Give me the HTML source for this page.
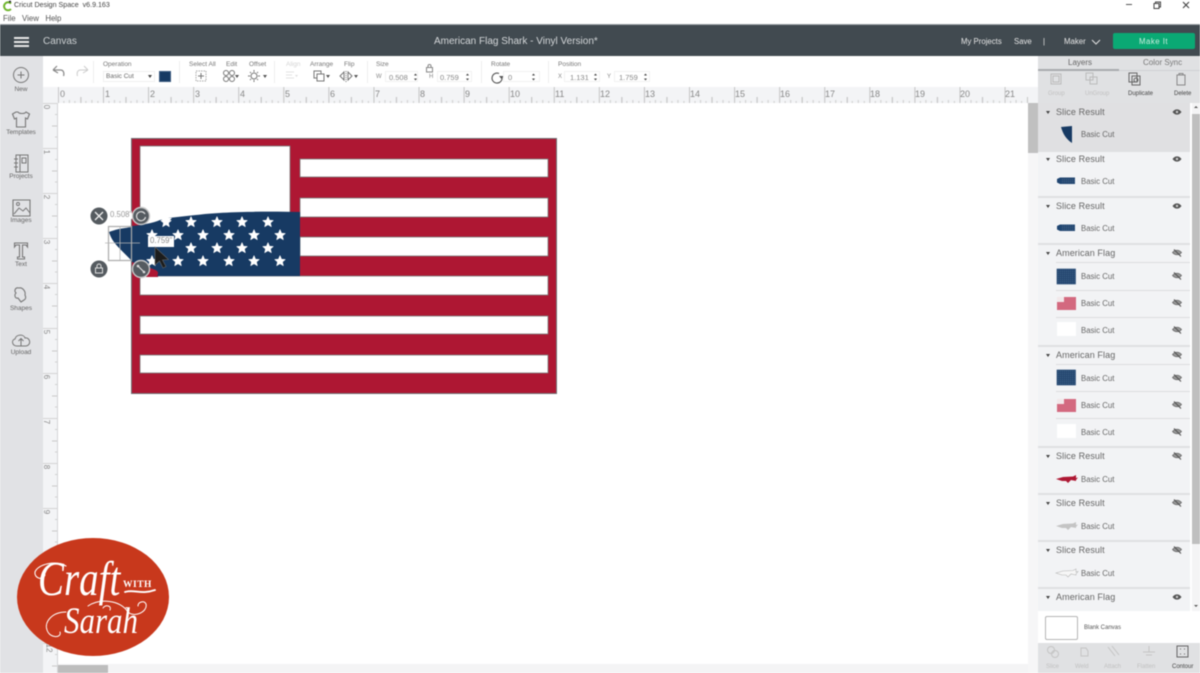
<!DOCTYPE html>
<html><head><meta charset="utf-8"><style>
html,body{margin:0;padding:0;background:#fff}
#p{position:relative;width:1200px;height:673px;overflow:hidden;background:#fff;font-family:"Liberation Sans",sans-serif;filter:blur(.45px)}
#p div,#p svg{position:absolute}
.t{position:absolute;white-space:nowrap;line-height:1}
.l{font-size:6.500px;color:#666;text-align:center;transform:translateX(-50%)}
.h{font-size:9px;color:#666;left:1056px;letter-spacing:.1px}
.b{font-size:7.800px;color:#666;left:1081px}
.o{font-size:6.500px;color:#777;top:62px}
.dv{left:1038px;width:152px;height:2px;background:#dfe0e2}
.sd{left:1056px;width:134px;height:1px;background:#dcdddf}
.ar{position:absolute;left:1046px;width:0;height:0;border-left:2.500px solid transparent;border-right:2.500px solid transparent;border-top:3px solid #444}
.in{position:absolute;top:71px;height:11px;background:#fff;border:1px solid #f2f2f2;font-size:7.500px;color:#888;line-height:11px;box-sizing:border-box}
.r{font-size:9px;color:#888;top:90px}
.rv{font-size:8px;color:#888;left:44px;transform:rotate(90deg)}
</style></head><body><div id="p">

<!-- title bar -->
<svg style="left:2px;top:0" width="12" height="12" viewBox="0 0 12 12"><path d="M9 3.600A4 4 0 1 0 9 9" fill="none" stroke="#6fb52c" stroke-width="2"/><circle cx="8" cy="1.600" r="1.100" fill="#333"/></svg>
<span class="t" style="left:14px;top:2px;font-size:7.100px;color:#444">Cricut Design Space&nbsp; v6.9.163</span>
<span class="t" style="left:3px;top:15px;font-size:7.800px;color:#555">File&nbsp;&nbsp; View&nbsp;&nbsp; Help</span>
<svg style="left:1120px;top:0" width="80" height="12" viewBox="0 0 80 12"><path d="M6 4.500h6" stroke="#555" fill="none"/><path d="M34 3.500h5v5h-5zM35.500 3.500v-1.500h5v5h-1.500" stroke="#444" fill="none"/><path d="M63 2l6 6M69 2l-6 6" stroke="#444" fill="none" stroke-width="1.100"/></svg>

<!-- top bar -->
<div style="left:0;top:24px;width:1200px;height:1.500px;background:#9aa0a4"></div>
<div style="left:0;top:25px;width:1200px;height:31px;background:#414a50"></div>
<div style="left:14px;top:37px;width:15px;height:2px;background:#e8e8e8"></div>
<div style="left:14px;top:41px;width:15px;height:2px;background:#e8e8e8"></div>
<div style="left:14px;top:45px;width:15px;height:2px;background:#e8e8e8"></div>
<span class="t" style="left:43px;top:36px;font-size:10px;color:#ccd0d2;transform:translateY(1px)">Canvas</span>
<span class="t" style="left:434px;top:37px;font-size:10px;color:#d4d7d9">American Flag Shark - Vinyl Version*</span>
<span class="t" style="left:961px;top:38px;font-size:7.800px;color:#e6e6e6">My Projects</span>
<span class="t" style="left:1014px;top:38px;font-size:7.800px;color:#e6e6e6">Save</span>
<span class="t" style="left:1043px;top:38px;font-size:7.800px;color:#e6e6e6">|</span>
<span class="t" style="left:1064px;top:38px;font-size:7.800px;color:#e6e6e6">Maker</span>
<svg style="left:1091px;top:39px" width="11" height="6" viewBox="0 0 11 6"><path d="M1 1l4 4 4-4" fill="none" stroke="#ddd" stroke-width="1.100"/></svg>
<div style="left:1113px;top:33px;width:82px;height:16px;background:#0aa974;border-radius:2px"></div>
<span class="t" style="left:1139px;top:38px;font-size:7.800px;color:#cdeee0;letter-spacing:.5px">Make It</span>

<!-- left panel -->
<div style="left:0;top:56px;width:43px;height:617px;background:#e1e2e5"></div>
<svg style="left:0;top:56px" width="43" height="310" viewBox="0 0 43 310">
<g fill="none" stroke="#777" stroke-width="1">
<circle cx="21" cy="19" r="7.500"/><path d="M21 15.500v7M17.500 19h7"/>
<path d="M16 56l-3.500 2 2 5 2-1v9h9v-9l2 1 2-5-3.500-2c-1 2-7 2-8 0z" stroke-width="1.100"/>
<path d="M16 99h12v17h-12zM20 99v17M14 103h4M14 107h4M14 111h4M22 102h4v5h-4z"/>
<path d="M13 144h17v16h-17z" stroke-width="1.100"/><path d="M14 158l5-6 4 3 3-3 4 5"/><circle cx="18" cy="148" r="1.500"/>
<path d="M14.500 187h13v4l-1.500-2h-3.500v12h2v2h-7v-2h2v-12h-3.500l-1.500 2z" stroke-width="1.100"/>
<path d="M19 232c-4-1-5 3-3 5-2 2-1 6 2 5l3 4 3-2c2-1 2-3 1-5 1-4-3-8-6-7z" stroke-width="1.100"/>
<path d="M17 290c-5 0-6-6-2-7 1-5 9-5 10-1 5-1 7 7 1 8zM21 290v-7M18.500 285l2.500-2.500 2.500 2.500"/>
</g></svg>
<span class="t l" style="left:21px;top:87px">New</span>
<span class="t l" style="left:21px;top:130px">Templates</span>
<span class="t l" style="left:21px;top:174px">Projects</span>
<span class="t l" style="left:21px;top:218px">Images</span>
<span class="t l" style="left:21px;top:262px">Text</span>
<span class="t l" style="left:21px;top:306px">Shapes</span>
<span class="t l" style="left:21px;top:350px">Upload</span>

<!-- toolbar -->
<svg style="left:43px;top:56px" width="995" height="31" viewBox="0 0 995 31">
<g fill="none" stroke="#888"><path d="M10 14l4-4M10 14l5 3M10.500 14h7c3 0 4 3 3 6" stroke-width="1.200"/><path d="M45 14l-4-4M45 14l-5 3M44.500 14h-7c-3 0-4 3-3 6" stroke="#ccc" stroke-width="1"/></g>
<g stroke="#eeeeee"><path d="M50.500 5v22M136.500 5v22M231.500 5v22M324.500 5v22M438.500 5v22M505.500 5v22"/></g>
<rect x="153" y="15" width="10" height="10" fill="none" stroke="#aaa" stroke-dasharray="1.500 1"/><path d="M158 17v6M155 20h6" stroke="#777"/>
<g fill="none" stroke="#777"><circle cx="183" cy="17" r="2.500"/><circle cx="189" cy="17" r="2.500"/><circle cx="183" cy="23" r="2.500"/><circle cx="189" cy="23" r="2.500"/>
<circle cx="211" cy="20" r="3"/><path d="M211 14v2M211 24v2M205 20h2M215 20h2M207 16l1 1M215 16l-1 1M207 24l1-1M215 24l-1-1"/>
<path d="M271 15h7v7h-7z"/><path d="M274 18h7v7h-7z" fill="#fff"/>
<path d="M303 15v11" stroke-dasharray="1 1"/><path d="M301 16l-4 4 4 4zM305 16l4 4-4 4z"/></g>
<path d="M243 16h8M243 19h6M243 22h8" stroke="#e2e2e2"/>
<path d="M192 19h4l-2 3zM220 19h4l-2 3zM283 19h4l-2 3zM311 19h4l-2 3z" fill="#555"/>
<path d="M252 19h3l-1.500 2z" fill="#ddd"/>
<path d="M456 17.500a5 5 0 1 0 3 4" fill="none" stroke="#555" stroke-width="1.100"/><path d="M456 20h5l-2.500 3z" fill="#555"/>
</svg>
<span class="t o" style="left:103px">Operation</span>
<div style="left:103px;top:71px;width:52px;height:11px;background:#fff;border:1px solid #f0f0f0;box-sizing:border-box"></div>
<span class="t" style="left:106px;top:73.500px;font-size:6.500px;color:#666">Basic Cut</span>
<div style="left:148px;top:75px;width:0;height:0;border-left:2px solid transparent;border-right:2px solid transparent;border-top:3px solid #444"></div>
<div style="left:159px;top:71px;width:12px;height:11px;background:#173a63;border:.5px solid #3a5a80;box-sizing:border-box"></div>
<span class="t o" style="left:189px">Select All</span>
<span class="t o" style="left:226px">Edit</span>
<span class="t o" style="left:249px">Offset</span>
<span class="t o" style="left:286px;color:#d4d4d4">Align</span>
<span class="t o" style="left:310px">Arrange</span>
<span class="t o" style="left:344px">Flip</span>
<span class="t o" style="left:376px">Size</span>
<span class="t o" style="left:491px">Rotate</span>
<span class="t o" style="left:558px">Position</span>
<span class="t" style="left:376px;top:74px;font-size:6px;color:#888">W</span>
<div class="in" style="left:385px;width:33px;padding-left:3px">0.508</div>
<svg style="left:425px;top:63px" width="9" height="10" viewBox="0 0 9 10"><path d="M1.500 4.500h6v4.500h-6zM3 4.500v-1.500a1.500 1.500 0 0 1 3 0v1.500" fill="none" stroke="#888"/></svg>
<span class="t" style="left:429px;top:74px;font-size:6px;color:#888">H</span>
<div class="in" style="left:437px;width:35px;padding-left:2px">0.759</div>
<div class="in" style="left:503px;width:37px;padding-left:4px">0</div>
<span class="t" style="left:558px;top:74px;font-size:6px;color:#888">X</span>
<div class="in" style="left:564px;width:36px;padding-left:5px">1.131</div>
<span class="t" style="left:607px;top:74px;font-size:6px;color:#888">Y</span>
<div class="in" style="left:614px;width:36px;padding-left:4px">1.759</div>
<svg style="left:410px;top:72px" width="240" height="10" viewBox="0 0 240 10"><path d="M4 3.500l1.500-2 1.500 2zM4 6.500l1.500 2 1.500-2zM56 3.500l1.500-2 1.500 2zM56 6.500l1.500 2 1.500-2zM122 3.500l1.500-2 1.500 2zM122 6.500l1.500 2 1.500-2zM184 3.500l1.500-2 1.500 2zM184 6.500l1.500 2 1.500-2zM234 3.500l1.500-2 1.500 2zM234 6.500l1.500 2 1.500-2z" fill="#444"/></svg>

<!-- rulers -->
<div style="left:43px;top:87px;width:995px;height:16px;background:#f3f4f6"></div>
<div style="left:43px;top:103px;width:15px;height:570px;background:#f3f4f6"></div>
<svg style="left:0;top:87px" width="1038" height="16"><defs><pattern id="rh" x="57.900" y="0" width="45.080" height="16" patternUnits="userSpaceOnUse"><path d="M.5 0V16" stroke="#c4c4c4"/><path d="M23 10V16" stroke="#bbb"/><path d="M11.500 13V16M34 13V16M6 14V16M17 14V16M28 14V16M40 14V16" stroke="#ccc"/></pattern></defs><rect x="58" width="970" height="16" fill="url(#rh)"/></svg>
<svg style="left:43px;top:0" width="15" height="673"><defs><pattern id="rv" x="0" y="103" width="15" height="45" patternUnits="userSpaceOnUse"><path d="M0 .5H15" stroke="#d4d4d4"/><path d="M9 23H15" stroke="#c8c8c8"/><path d="M12 11.500H15M12 34H15" stroke="#d0d0d0"/></pattern></defs><rect y="103" width="15" height="570" fill="url(#rv)"/></svg>
<div style="left:57px;top:103px;width:1px;height:570px;background:#d4d5d8"></div>
<span class="t r" style="left:60px">0</span><span class="t r" style="left:105px">1</span><span class="t r" style="left:150px">2</span><span class="t r" style="left:195px">3</span><span class="t r" style="left:240px">4</span><span class="t r" style="left:285px">5</span><span class="t r" style="left:330px">6</span><span class="t r" style="left:375px">7</span><span class="t r" style="left:420px">8</span><span class="t r" style="left:465px">9</span><span class="t r" style="left:510px">10</span><span class="t r" style="left:555px">11</span><span class="t r" style="left:600px">12</span><span class="t r" style="left:645px">13</span><span class="t r" style="left:690px">14</span><span class="t r" style="left:735px">15</span><span class="t r" style="left:780px">16</span><span class="t r" style="left:825px">17</span><span class="t r" style="left:870px">18</span><span class="t r" style="left:915px">19</span><span class="t r" style="left:960px">20</span><span class="t r" style="left:1005px">21</span>
<span class="t rv" style="top:103px">0</span><span class="t rv" style="top:148px">1</span><span class="t rv" style="top:193px">2</span><span class="t rv" style="top:238px">3</span><span class="t rv" style="top:283px">4</span><span class="t rv" style="top:328px">5</span><span class="t rv" style="top:373px">6</span><span class="t rv" style="top:418px">7</span><span class="t rv" style="top:463px">8</span><span class="t rv" style="top:508px">9</span>
<span class="t rv" style="top:644px">12</span>

<!-- canvas scrollbars -->
<div style="left:1028px;top:103px;width:10px;height:570px;background:#f6f6f7"></div>
<div style="left:1028px;top:103px;width:10px;height:50px;background:#c0c0c0"></div>
<div style="left:58px;top:664px;width:970px;height:9px;background:#f4f4f5"></div>
<div style="left:58px;top:665px;width:50px;height:8px;background:#bdbdbd"></div>

<!-- flag -->
<svg style="left:0;top:0" width="1030" height="673" viewBox="0 0 1030 673">
<defs>
<path id="star" d="M0-5.500L1.600-1.800 5.400-1.500 2.500 1 3.400 4.800 0 2.800-3.400 4.800-2.500 1-5.400-1.500-1.600-1.800z" fill="#fff" stroke="#fff" stroke-width=".5"/></defs>
<rect x="131.500" y="138.500" width="425" height="255" fill="#ae1733" stroke="#6e6e72" stroke-width="1"/>
<g fill="#fff" stroke="#777" stroke-width=".8">
<rect x="140" y="146" width="150" height="90"/>
<rect x="300" y="159" width="248" height="18"/>
<rect x="300" y="198" width="248" height="19"/>
<rect x="300" y="237" width="248" height="19"/>
<rect x="140" y="276" width="408" height="19"/>
<rect x="140" y="316" width="408" height="18"/>
<rect x="140" y="355" width="408" height="18"/>
</g>
<path d="M148 267L161 267L158 277L146 277z" fill="#ae1733"/>
<rect x="132" y="218" width="8" height="12" fill="#ae1733"/>
<path d="M109 232C116 229 124 228 132 227V261L121 250C115 244 111 239 109 232z" fill="#173a63"/>
<path d="M132 226C142 225 153 223 160 220L168 218C178 217 186 216 196 215C220 212 260 211 300 212V276H157C160 271 156 270 150 268L132 262z" fill="#173a63"/>
<g>
<use href="#star" x="166" y="222"/><use href="#star" x="191" y="222"/><use href="#star" x="217" y="222"/><use href="#star" x="242" y="222"/><use href="#star" x="268" y="222"/>
<use href="#star" x="152" y="235"/><use href="#star" x="178" y="235"/><use href="#star" x="203" y="235"/><use href="#star" x="229" y="235"/><use href="#star" x="254" y="235"/><use href="#star" x="280" y="235"/>
<use href="#star" x="191" y="248"/><use href="#star" x="217" y="248"/><use href="#star" x="242" y="248"/><use href="#star" x="268" y="248"/>
<use href="#star" x="152" y="261"/><use href="#star" x="178" y="261"/><use href="#star" x="203" y="261"/><use href="#star" x="229" y="261"/><use href="#star" x="254" y="261"/><use href="#star" x="280" y="261"/>
</g>
<path d="M160 218l6 6 6-6z" fill="#fff"/>
<!-- selection -->
<rect x="108.500" y="226.500" width="23" height="34" fill="none" stroke="#aaa" stroke-width="1.200"/>
<path d="M120 226v34M105 243h35" stroke="#b5b5b5" stroke-width=".8" fill="none"/>
<g fill="#555b60"><circle cx="99" cy="216" r="8.500"/><circle cx="99" cy="269" r="8.500"/></g>
<g stroke="#c8c8c8" stroke-width="1.400" fill="#555b60"><circle cx="141" cy="216" r="8.500"/><circle cx="141" cy="269" r="8.500"/></g>
<path d="M95 212l8 8M103 212l-8 8" stroke="#eee" stroke-width="1.300"/>
<path d="M95.500 268h7v5h-7zM97 268v-2a2 2 0 0 1 4 0v2" fill="none" stroke="#ddd"/>
<path d="M145 214a4.500 4.500 0 1 0 .5 3" fill="none" stroke="#ddd" stroke-width="1.200"/>
<path d="M138 266l6 6" stroke="#ddd" stroke-width="1.200"/><circle cx="138" cy="266" r="1.300" fill="#ddd"/><circle cx="144" cy="272" r="1.300" fill="#ddd"/>
<rect x="148" y="236" width="26" height="11" fill="#fff"/>
<path d="M155 247v18l4.500-4 3.500 7 3-1.500-3.500-6.500 6-.5z" fill="#1c1c1c" stroke="#666" stroke-width=".6"/>
</svg>
<span class="t" style="left:110px;top:211px;font-size:7.800px;color:#999;background:#fff">0.508"</span>
<span class="t" style="left:150px;top:237px;font-size:7.800px;color:#888">0.759"</span>

<!-- right panel -->
<div style="left:1038px;top:56px;width:162px;height:47px;background:#e0e1e3"></div>
<div style="left:1038px;top:69px;width:81px;height:2px;background:#a8abae"></div>
<div style="left:1119px;top:70px;width:81px;height:1px;background:#cfd0d3"></div>
<span class="t" style="left:1068px;top:59px;font-size:8px;color:#666">Layers</span>
<span class="t" style="left:1143px;top:59px;font-size:8px;color:#777">Color Sync</span>
<span class="t" style="left:1048px;top:91px;font-size:6px;color:#c0c0c0">Group</span>
<span class="t" style="left:1085px;top:91px;font-size:6px;color:#c0c0c0">UnGroup</span>
<span class="t" style="left:1128px;top:91px;font-size:6px;color:#444">Duplicate</span>
<span class="t" style="left:1174px;top:91px;font-size:6px;color:#444">Delete</span>
<svg style="left:1038px;top:71px" width="162" height="20" viewBox="0 0 162 20"><g fill="none" stroke="#bbb"><rect x="13" y="3" width="10" height="10"/><rect x="15" y="5" width="6" height="6"/><path d="M48 2h7v7h-7zM52 6h7v7h-7z"/></g><g fill="none" stroke="#666"><rect x="91" y="2" width="8" height="9"/><rect x="94" y="5" width="8" height="9"/><circle cx="98" cy="9" r="2"/></g><path d="M139 4h8v10h-8zM141 4v-1.500h4v1.500" fill="none" stroke="#888"/></svg>

<div style="left:1038px;top:103px;width:152px;height:508px;background:#f2f3f5"></div>
<div style="left:1038px;top:103px;width:152px;height:47px;background:#e0e0e2"></div>
<div style="left:1192px;top:103px;width:8px;height:508px;background:#f4f4f5"></div>
<div style="left:1192px;top:114px;width:8px;height:430px;background:#bfbfbf"></div>
<div style="left:1194px;top:106px;width:0;height:0;border-left:2px solid transparent;border-right:2px solid transparent;border-bottom:2.500px solid #555"></div>
<div style="left:1194px;top:605px;width:0;height:0;border-left:2px solid transparent;border-right:2px solid transparent;border-top:2.500px solid #555"></div>

<div class="dv" style="top:150px"></div><div class="dv" style="top:196px"></div><div class="dv" style="top:243px"></div><div class="dv" style="top:345px"></div><div class="dv" style="top:446px"></div><div class="dv" style="top:493px"></div><div class="dv" style="top:540px"></div><div class="dv" style="top:587px"></div>
<div class="sd" style="top:262px"></div><div class="sd" style="top:290px"></div><div class="sd" style="top:317px"></div><div class="sd" style="top:364px"></div><div class="sd" style="top:391px"></div><div class="sd" style="top:418px"></div>

<i class="ar" style="top:111px"></i><span class="t h" style="top:108px">Slice Result</span><span class="t b" style="top:131px">Basic Cut</span>
<i class="ar" style="top:158px"></i><span class="t h" style="top:155px">Slice Result</span><span class="t b" style="top:178px">Basic Cut</span>
<i class="ar" style="top:205px"></i><span class="t h" style="top:202px">Slice Result</span><span class="t b" style="top:225px">Basic Cut</span>
<i class="ar" style="top:252px"></i><span class="t h" style="top:249px">American Flag</span>
<span class="t b" style="top:273px">Basic Cut</span><span class="t b" style="top:300px">Basic Cut</span><span class="t b" style="top:327px">Basic Cut</span>
<i class="ar" style="top:354px"></i><span class="t h" style="top:351px">American Flag</span>
<span class="t b" style="top:375px">Basic Cut</span><span class="t b" style="top:402px">Basic Cut</span><span class="t b" style="top:429px">Basic Cut</span>
<i class="ar" style="top:455px"></i><span class="t h" style="top:452px">Slice Result</span><span class="t b" style="top:476px">Basic Cut</span>
<i class="ar" style="top:502px"></i><span class="t h" style="top:499px">Slice Result</span><span class="t b" style="top:523px">Basic Cut</span>
<i class="ar" style="top:549px"></i><span class="t h" style="top:546px">Slice Result</span><span class="t b" style="top:570px">Basic Cut</span>
<i class="ar" style="top:596px"></i><span class="t h" style="top:593px">American Flag</span>

<svg style="left:1038px;top:103px" width="152" height="508" viewBox="0 0 152 508">
<defs>
<g id="eye"><path d="M-4.500 0C-2 -3.500 2 -3.500 4.500 0C2 3.500 -2 3.500 -4.500 0z" fill="#555"/><circle r="1.200" fill="#ccc"/></g>
<g id="noeye"><path d="M-4.500 -.5C-2 -3.500 2 -3.500 4.500 -.5C2 2.500 -2 2.500 -4.500 -.5z" fill="#999" stroke="#666" stroke-width=".8"/><path d="M-3-3.500L4 3.500" stroke="#555" stroke-width="1.100"/></g>
<pattern id="dots" width="2" height="2" patternUnits="userSpaceOnUse"><rect width="2" height="2" fill="#24476f"/><rect width="1" height="1" fill="#3f608a"/></pattern>
<g id="mf"><rect width="19" height="13" y="1" fill="#d3697f"/><rect x="0" y="1" width="7" height="5" fill="#f2e8ea"/></g>
<path id="shk" d="M0 3l7-2 10-.500 3-1.500 0 3 2-.5-2 2.500 0 1-5-1-3 3-2-2-4 0z"/>
</defs>
<use href="#eye" x="139" y="9"/><use href="#eye" x="139" y="56"/><use href="#eye" x="139" y="103"/>
<use href="#noeye" x="139" y="150"/><use href="#noeye" x="139" y="173"/><use href="#noeye" x="139" y="200"/><use href="#noeye" x="139" y="227"/>
<use href="#noeye" x="139" y="252"/><use href="#noeye" x="139" y="275"/><use href="#noeye" x="139" y="302"/><use href="#noeye" x="139" y="329"/>
<use href="#noeye" x="139" y="353"/><use href="#noeye" x="139" y="400"/><use href="#noeye" x="139" y="447"/>
<use href="#eye" x="139" y="494"/>
<path d="M23 24L34 23V40C28 36 25 31 23 24z" fill="#173a63"/>
<path d="M19 76l3-1.500H37V81H22l-3-1.500z" fill="#1f4571"/><rect x="24" y="75" width="13" height="5.500" fill="url(#dots)"/>
<path d="M19 123l3-1.500H37V128H22l-3-1.500z" fill="#1f4571"/><rect x="24" y="122" width="13" height="5.500" fill="url(#dots)"/>
<rect x="19" y="166" width="18.500" height="15" fill="url(#dots)" stroke="#1f4571" stroke-width=".6"/>
<use href="#mf" x="19" y="193"/>
<rect x="19" y="219" width="19" height="14" fill="#fff"/>
<rect x="19" y="267" width="18.500" height="15" fill="url(#dots)" stroke="#1f4571" stroke-width=".6"/>
<use href="#mf" x="19" y="295"/>
<rect x="19" y="321" width="19" height="14" fill="#fff"/>
<use href="#shk" x="18" y="373" fill="#ae1733"/>
<use href="#shk" x="18" y="420" fill="#c4c4c4"/>
<use href="#shk" x="18" y="467" fill="#f6f6f6" stroke="#b5b5b5" stroke-width=".6"/>
</svg>

<div style="left:1038px;top:611px;width:162px;height:32px;background:#fff"></div>
<div style="left:1045px;top:616px;width:33px;height:24px;background:#fff;border:1px solid #b5b5b5;border-radius:2px;box-sizing:border-box"></div>
<span class="t" style="left:1084px;top:625px;font-size:6px;color:#555">Blank Canvas</span>
<div style="left:1038px;top:643px;width:162px;height:30px;background:#e0e1e3"></div>
<svg style="left:1038px;top:643px" width="162" height="20" viewBox="0 0 162 20"><g fill="none" stroke="#c4c4c4"><circle cx="13" cy="7" r="3.500"/><circle cx="17" cy="11" r="3.500"/><path d="M43 5h5l2 3v5h-7zM70 4l7 9M74 3l7 9"/><path d="M105 9h12M111 3v6M108 12h6"/></g><g fill="none" stroke="#666"><rect x="139" y="3" width="11" height="11"/></g><path d="M142 6h1M146 6h1M142 11h1M146 11h1" stroke="#666"/></svg>
<span class="t" style="left:1046px;top:664px;font-size:6px;color:#c0c0c0">Slice</span>
<span class="t" style="left:1075px;top:664px;font-size:6px;color:#c0c0c0">Weld</span>
<span class="t" style="left:1104px;top:664px;font-size:6px;color:#c0c0c0">Attach</span>
<span class="t" style="left:1137px;top:664px;font-size:6px;color:#c0c0c0">Flatten</span>
<span class="t" style="left:1172px;top:664px;font-size:6px;color:#444">Contour</span>

<!-- logo -->
<svg style="left:0;top:520px" width="200" height="153" viewBox="0 0 200 153">
<ellipse cx="93" cy="77" rx="76" ry="59" fill="#c8381c"/>
<g fill="#fff" font-family="'Liberation Serif',serif" font-style="italic">
<text transform="translate(38 75) scale(1 1.250)" font-size="39">Craft</text>
<text transform="translate(64 113) scale(1 1.200)" font-size="31">Sarah</text>
</g>
<text x="123" y="67" fill="#fff" font-family="'Liberation Serif',serif" font-weight="bold" font-size="9.500" letter-spacing=".5">WITH</text>
<g fill="none" stroke="#fff" stroke-linecap="round">
<path d="M125 72C134 69 141 75 155 70" stroke-width="1.800"/>
<path d="M66 46C56 40 38 44 35 52C34 58 42 61 45 55" stroke-width="1.100"/>
<path d="M88 86C100 78 120 80 128 92C134 98 148 92 146 84C144 80 138 82 138 86" stroke-width="1"/>
<path d="M103 88C106 84 112 86 110 90" stroke-width="1"/>
<path d="M66 92C52 92 44 102 47 110C50 119 62 118 60 112" stroke-width="1"/>
</g>
</svg>
</div></body></html>
